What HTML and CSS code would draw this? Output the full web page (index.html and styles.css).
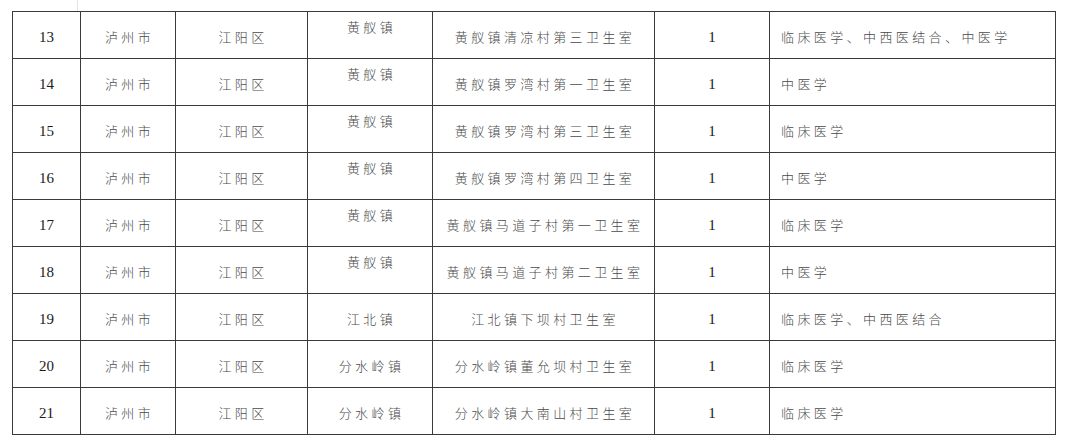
FILE: index.html
```html
<!DOCTYPE html>
<html lang="zh-CN">
<head>
<meta charset="utf-8">
<link rel="stylesheet" href="styles.css">
</head>
<body>
<div class="ruler"><span class="ruler-mark"></span></div>
<table class="sheet">
  <colgroup>
    <col class="c1"><col class="c2"><col class="c3"><col class="c4"><col class="c5"><col class="c6"><col class="c7">
  </colgroup>
  <tbody>
    <tr><td class="num">13</td><td class="zh">泸州市</td><td class="zh">江阳区</td><td class="zh top">黄舣镇</td><td class="zh">黄舣镇清凉村第三卫生室</td><td class="num">1</td><td class="zh left">临床医学、中西医结合、中医学</td></tr>
    <tr><td class="num">14</td><td class="zh">泸州市</td><td class="zh">江阳区</td><td class="zh top">黄舣镇</td><td class="zh">黄舣镇罗湾村第一卫生室</td><td class="num">1</td><td class="zh left">中医学</td></tr>
    <tr><td class="num">15</td><td class="zh">泸州市</td><td class="zh">江阳区</td><td class="zh top">黄舣镇</td><td class="zh">黄舣镇罗湾村第三卫生室</td><td class="num">1</td><td class="zh left">临床医学</td></tr>
    <tr><td class="num">16</td><td class="zh">泸州市</td><td class="zh">江阳区</td><td class="zh top">黄舣镇</td><td class="zh">黄舣镇罗湾村第四卫生室</td><td class="num">1</td><td class="zh left">中医学</td></tr>
    <tr><td class="num">17</td><td class="zh">泸州市</td><td class="zh">江阳区</td><td class="zh top">黄舣镇</td><td class="zh">黄舣镇马道子村第一卫生室</td><td class="num">1</td><td class="zh left">临床医学</td></tr>
    <tr><td class="num">18</td><td class="zh">泸州市</td><td class="zh">江阳区</td><td class="zh top">黄舣镇</td><td class="zh">黄舣镇马道子村第二卫生室</td><td class="num">1</td><td class="zh left">中医学</td></tr>
    <tr><td class="num">19</td><td class="zh">泸州市</td><td class="zh">江阳区</td><td class="zh">江北镇</td><td class="zh">江北镇下坝村卫生室</td><td class="num">1</td><td class="zh left">临床医学、中西医结合</td></tr>
    <tr><td class="num">20</td><td class="zh">泸州市</td><td class="zh">江阳区</td><td class="zh">分水岭镇</td><td class="zh">分水岭镇董允坝村卫生室</td><td class="num">1</td><td class="zh left">临床医学</td></tr>
    <tr><td class="num">21</td><td class="zh">泸州市</td><td class="zh">江阳区</td><td class="zh">分水岭镇</td><td class="zh">分水岭镇大南山村卫生室</td><td class="num">1</td><td class="zh left">临床医学</td></tr>
  </tbody>
</table>
</body>
</html>
```
FILE: styles.css
```css
html, body {
  margin: 0;
  padding: 0;
  background: #ffffff;
}
.ruler {
  height: 11px;
  display: flex;
}
.ruler-mark {
  margin-left: 77px;
  width: 1px;
  height: 11px;
  background: #e4e4e4;
}
.sheet {
  margin-left: 12px;
  border-collapse: collapse;
  table-layout: fixed;
  width: 1044px;
}
.c1 { width: 68px; }
.c2 { width: 95px; }
.c3 { width: 132px; }
.c4 { width: 125px; }
.c5 { width: 222px; }
.c6 { width: 115px; }
.c7 { width: 286px; }
.sheet td {
  border: 1px solid #3a3a3a;
  height: 46px;
  padding: 0;
  text-align: center;
  vertical-align: middle;
  box-sizing: border-box;
}
.sheet tr { height: 47px; }
.num {
  font-family: "Liberation Serif", "Times New Roman", serif;
  font-size: 15px;
  color: #1a1a1a;
  padding-top: 4px !important;
}
.zh {
  font-family: "Noto Sans CJK SC", sans-serif;
  font-size: 13px;
  font-weight: 300;
  letter-spacing: 3.4px;
  color: #4a4a4a;
  padding-top: 3px !important;
  text-indent: 3px;
}
.zh.top {
  vertical-align: top;
  padding-top: 5px !important;
}
.zh.left {
  text-align: left;
  padding-left: 11px;
  text-indent: 0;
}
```
